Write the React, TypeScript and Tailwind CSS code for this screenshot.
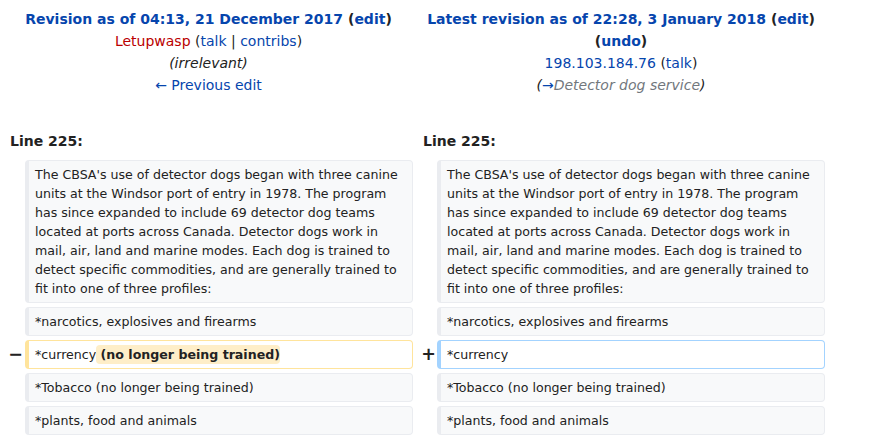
import React from "react";

const A = ({ children, red }: { children: React.ReactNode; red?: boolean }) => (
  <span className={red ? "text-[#ba0000]" : "text-[#0645ad]"}>{children}</span>
);

const boxBase =
  "border border-l-4 rounded-[4px] py-[4px] pl-[6px] pr-[6px] text-[12.6px] leading-[19px] whitespace-pre-wrap";
const ctx = `${boxBase} bg-[#f8f9fa] border-[#eaecf0]`;
const del = `${boxBase} bg-white border-[#ffe49c]`;
const add = `${boxBase} bg-white border-[#a3d3ff]`;

const para =
  "The CBSA's use of detector dogs began with three canine\nunits at the Windsor port of entry in 1978. The program\nhas since expanded to include 69 detector dog teams\nlocated at ports across Canada. Detector dogs work in\nmail, air, land and marine modes. Each dog is trained to\ndetect specific commodities, and are generally trained to\nfit into one of three profiles:";

export default function App() {
  return (
    <div className="font-['DejaVu_Sans',sans-serif] text-[#222] bg-white w-[874px] h-[439px] overflow-hidden">
      {/* header */}
      <div className="flex pt-[8px] text-[14px] leading-[22px] text-center">
        <div className="w-[417px]">
          <div className="font-bold">
            <A>Revision as of 04:13, 21 December 2017</A> (<A>edit</A>)
          </div>
          <div>
            <A red>Letupwasp</A> (<A>talk</A> | <A>contribs</A>)
          </div>
          <div className="italic">(irrelevant)</div>
          <div>
            <A>← Previous edit</A>
          </div>
        </div>
        <div className="w-[408px]">
          <div className="font-bold">
            <A>Latest revision as of 22:28, 3 January 2018</A> (<A>edit</A>)
          </div>
          <div className="font-bold">
            (<A>undo</A>)
          </div>
          <div>
            <A>198.103.184.76</A> (<A>talk</A>)
          </div>
          <div className="italic">
            (<A>→</A>
            <span className="text-[#72777d]">Detector dog service</span>)
          </div>
        </div>
      </div>

      {/* line numbers */}
      <div className="flex mt-[34px] text-[14px] leading-[22px] font-bold">
        <div className="w-[413px] pl-[10px]">Line 225:</div>
        <div className="pl-[10px]">Line 225:</div>
      </div>

      {/* diff rows */}
      <div className="grid grid-cols-[25px_388px_24px_388px] gap-y-[4px] mt-[8px]">
        <div />
        <div className={ctx}>{para}</div>
        <div />
        <div className={ctx}>{para}</div>

        <div />
        <div className={ctx}>*narcotics, explosives and firearms</div>
        <div />
        <div className={ctx}>*narcotics, explosives and firearms</div>

        <div className="flex items-center justify-end pr-[2px] text-[17.5px] font-bold leading-none">−</div>
        <div className={del}>
          *currency
          <span className="font-bold bg-[#feeec8] rounded-[4px] py-[2px]"> (no longer being trained)</span>
        </div>
        <div className="flex items-center justify-end pr-[1px] text-[17.5px] font-bold leading-none">+</div>
        <div className={add}>*currency</div>

        <div />
        <div className={ctx}>*Tobacco (no longer being trained)</div>
        <div />
        <div className={ctx}>*Tobacco (no longer being trained)</div>

        <div />
        <div className={ctx}>*plants, food and animals</div>
        <div />
        <div className={ctx}>*plants, food and animals</div>
      </div>
    </div>
  );
}
